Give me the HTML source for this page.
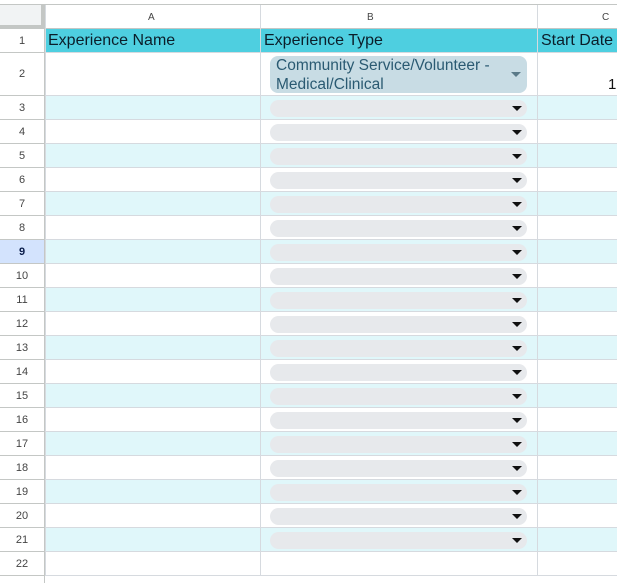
<!DOCTYPE html>
<html><head><style>
*{margin:0;padding:0;box-sizing:border-box}
html,body{width:617px;height:583px;overflow:hidden}
body{background:#fff;font-family:"Liberation Sans",Arial,sans-serif;position:relative}
.a{position:absolute}
.rn{position:absolute;left:0;width:45px;text-align:center;font-size:11px;color:#444;border-bottom:1px solid #c4c7c5;border-right:1px solid #c4c7c5;background:#fff}
.row{position:absolute;left:45px;width:572px;border-bottom:1px solid #d6dadf}
.chip{position:absolute;left:270px;width:257px;height:17px;border-radius:9px;background:#e7e9ec}
.chip:after{content:"";position:absolute;right:5px;top:6px;border-left:5px solid transparent;border-right:5px solid transparent;border-top:5px solid #111}
.vl{position:absolute;top:5px;width:1px;height:571px;background:#d6dadf}
</style></head><body>
<div class="a" style="left:0;top:0;width:617px;height:5px;background:#fff;border-bottom:1px solid #c4c7c5"></div>
<div class="a" style="left:0;top:5px;width:45px;height:24px;background:#f1f3f4;border-right:4px solid #c4c7c5;border-bottom:4px solid #c4c7c5"></div>
<div class="a" style="left:45px;top:5px;width:572px;height:24px;background:#fff;border-bottom:1px solid #c4c7c5;font-size:10px;color:#444">
<span class="a" style="left:103px;top:7px">A</span><span class="a" style="left:322px;top:7px">B</span><span class="a" style="left:557px;top:7px">C</span></div>
<div class="row" style="top:29px;height:24px;background:#4ecfe0"></div>
<div class="a" style="left:48px;top:32px;font-size:16px;color:#0b1e2a">Experience Name</div>
<div class="a" style="left:264px;top:32px;font-size:16px;color:#0b1e2a">Experience Type</div>
<div class="a" style="left:541px;top:32px;font-size:16px;color:#0b1e2a;white-space:nowrap">Start Date</div>
<div class="rn" style="top:29px;height:24px;line-height:24px">1</div>
<div class="row" style="top:53px;height:43px;background:#fff"></div>
<div class="rn" style="top:53px;height:43px;line-height:43px">2</div>
<div class="a" style="left:270px;top:56px;width:257px;height:37px;border-radius:8px;background:#c8dce4"></div>
<div class="a" style="left:276px;top:56px;font-size:15.5px;line-height:19px;color:#2a5a72;white-space:nowrap">Community Service/Volunteer -<br>Medical/Clinical</div>
<div class="a" style="left:511px;top:72px;border-left:5px solid transparent;border-right:5px solid transparent;border-top:5px solid #5a7a88"></div>
<div class="a" style="left:608px;top:76px;font-size:15px;color:#111">1.</div>
<div id="rows"></div>
<div class="vl" style="left:45px"></div><div class="vl" style="left:260px"></div><div class="vl" style="left:537px"></div>
<script>
var h='';for(var i=3;i<=23;i++){var t=96+(i-3)*24;var bg=(i%2==1&&i<=21)?'#e0f7fa':'#fff';
h+='<div class="row" style="top:'+t+'px;height:24px;background:'+bg+'"></div>';
h+='<div class="rn" style="top:'+t+'px;height:24px;line-height:24px;'+(i==9?'background:#d3e3fd;font-weight:bold;color:#0b1e4a':'')+'">'+i+'</div>';
if(i<=21)h+='<div class="chip" style="top:'+(t+4)+'px"></div>';}
document.getElementById('rows').outerHTML=h;
</script>
</body></html>
